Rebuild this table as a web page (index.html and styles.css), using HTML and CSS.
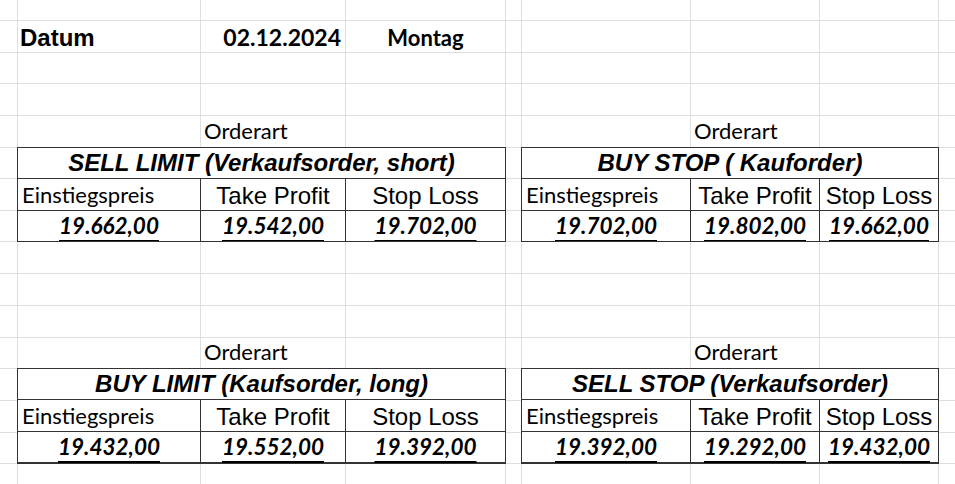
FILE: index.html
```html
<!DOCTYPE html>
<html lang="de">
<head>
<meta charset="utf-8">
<title>Orderarten</title>
<link rel="stylesheet" href="styles.css">
</head>
<body>
<div class="sheet">
  <!-- row 1 -->
  <div class="c"></div><div class="c"></div><div class="c"></div><div class="c"></div><div class="c"></div><div class="c"></div><div class="c"></div><div class="c"></div><div class="c"></div>
  <!-- row 2 -->
  <div class="c"></div>
  <div class="c left arial bold datum">Datum</div>
  <div class="c right cal bold date">02.12.2024</div>
  <div class="c center cal bold day">Montag</div>
  <div class="c"></div><div class="c"></div><div class="c"></div><div class="c"></div><div class="c"></div>
  <!-- row 3 -->
  <div class="c"></div><div class="c"></div><div class="c"></div><div class="c"></div><div class="c"></div><div class="c"></div><div class="c"></div><div class="c"></div><div class="c"></div>
  <!-- row 4 -->
  <div class="c"></div><div class="c"></div><div class="c"></div><div class="c"></div><div class="c"></div><div class="c"></div><div class="c"></div><div class="c"></div><div class="c"></div>
  <!-- row 5 -->
  <div class="c"></div><div class="c"></div>
  <div class="c left cal label">Orderart</div>
  <div class="c"></div><div class="c"></div><div class="c"></div>
  <div class="c left cal label">Orderart</div>
  <div class="c"></div><div class="c"></div>

  <!-- order tables (placed explicitly) -->
  <div class="order order-l top">
    <div class="o-title arial">SELL LIMIT (Verkaufsorder, short)</div>
    <div class="o-head cal left">Einstiegspreis</div>
    <div class="o-head arial center">Take Profit</div>
    <div class="o-head arial center">Stop Loss</div>
    <div class="o-val cal center"><u>19.662,00</u></div>
    <div class="o-val cal center"><u>19.542,00</u></div>
    <div class="o-val cal center"><u>19.702,00</u></div>
  </div>
  <div class="order order-r top">
    <div class="o-title arial">BUY STOP ( Kauforder)</div>
    <div class="o-head cal left">Einstiegspreis</div>
    <div class="o-head arial center">Take Profit</div>
    <div class="o-head arial center">Stop Loss</div>
    <div class="o-val cal center"><u>19.702,00</u></div>
    <div class="o-val cal center"><u>19.802,00</u></div>
    <div class="o-val cal center"><u>19.662,00</u></div>
  </div>
  <div class="order order-l bottom">
    <div class="o-title arial">BUY LIMIT (Kaufsorder, long)</div>
    <div class="o-head cal left">Einstiegspreis</div>
    <div class="o-head arial center">Take Profit</div>
    <div class="o-head arial center">Stop Loss</div>
    <div class="o-val cal center"><u>19.432,00</u></div>
    <div class="o-val cal center"><u>19.552,00</u></div>
    <div class="o-val cal center"><u>19.392,00</u></div>
  </div>
  <div class="order order-r bottom">
    <div class="o-title arial">SELL STOP (Verkaufsorder)</div>
    <div class="o-head cal left">Einstiegspreis</div>
    <div class="o-head arial center">Take Profit</div>
    <div class="o-head arial center">Stop Loss</div>
    <div class="o-val cal center"><u>19.392,00</u></div>
    <div class="o-val cal center"><u>19.292,00</u></div>
    <div class="o-val cal center"><u>19.432,00</u></div>
  </div>

  <!-- rows 6-8: remaining cells A, E, I -->
  <div class="c"></div><div class="c"></div><div class="c"></div>
  <div class="c"></div><div class="c"></div><div class="c"></div>
  <div class="c"></div><div class="c"></div><div class="c"></div>
  <!-- row 9 -->
  <div class="c"></div><div class="c"></div><div class="c"></div><div class="c"></div><div class="c"></div><div class="c"></div><div class="c"></div><div class="c"></div><div class="c"></div>
  <!-- row 10 -->
  <div class="c"></div><div class="c"></div><div class="c"></div><div class="c"></div><div class="c"></div><div class="c"></div><div class="c"></div><div class="c"></div><div class="c"></div>
  <!-- row 11 -->
  <div class="c"></div><div class="c"></div><div class="c"></div><div class="c"></div><div class="c"></div><div class="c"></div><div class="c"></div><div class="c"></div><div class="c"></div>
  <!-- row 12 -->
  <div class="c"></div><div class="c"></div>
  <div class="c left cal label">Orderart</div>
  <div class="c"></div><div class="c"></div><div class="c"></div>
  <div class="c left cal label">Orderart</div>
  <div class="c"></div><div class="c"></div>
  <!-- rows 13-15: remaining cells A, E, I -->
  <div class="c"></div><div class="c"></div><div class="c"></div>
  <div class="c"></div><div class="c"></div><div class="c"></div>
  <div class="c"></div><div class="c"></div><div class="c"></div>
  <!-- row 16 -->
  <div class="c"></div><div class="c"></div><div class="c"></div><div class="c"></div><div class="c"></div><div class="c"></div><div class="c"></div><div class="c"></div><div class="c"></div>
</div>
</body>
</html>
```
FILE: styles.css
```css
* { box-sizing: border-box; }
html, body { margin: 0; padding: 0; background: #fff; }
body { width: 955px; height: 484px; overflow: hidden; color: #000; }

.sheet {
  width: 955px;
  height: 484px;
  overflow: hidden;
  display: grid;
  gap: 1px;
  background: #dedede;
  grid-template-columns: 17px 182px 144px 159px 15px 168px 128px 118px 1fr;
  grid-template-rows: 20px 31px 30px 31px 31px 30px 31px 30px 31px 31px 31px 30px 31px 31px 30px 1fr;
}

.c {
  background: #fff;
  display: flex;
  align-items: flex-end;
  white-space: nowrap;
  min-width: 0;
  line-height: 1;
}

.arial { font-family: "Liberation Sans", Arial, sans-serif; font-size: 24px; }
.cal { font-family: Lato, "Liberation Sans", sans-serif; font-size: 22px; }
.bold { font-weight: 700; }

.left { justify-content: flex-start; padding-left: 3px; }
.center { justify-content: center; }
.right { justify-content: flex-end; padding-right: 4px; }

.datum { padding-bottom: 2px; padding-left: 2px; }
.date { padding-bottom: 3px; font-size: 23px; }
.day { padding-bottom: 3px; font-size: 22px; }
.label { padding-bottom: 5px; }

.order {
  display: grid;
  gap: 1px;
  background: #333;
  outline: 1px solid #333;
  grid-template-rows: 30px 31px 30px;
}
.order-l { grid-column: 2 / span 3; grid-template-columns: 182px 144px 159px; }
.order-r { grid-column: 6 / span 3; grid-template-columns: 168px 128px 118px; }
.top { grid-row: 6 / span 3; }
.bottom { grid-row: 13 / span 3; }

.o-title, .o-head, .o-val {
  background: #fff;
  display: flex;
  align-items: flex-end;
  white-space: nowrap;
  line-height: 1;
}
.o-title {
  grid-column: 1 / -1;
  justify-content: center;
  font-weight: 700;
  font-style: italic;
  padding-bottom: 3px;
}
.o-head { padding-bottom: 4px; }
.o-head.arial { padding-bottom: 2px; }
.o-head.left { padding-left: 4px; }
.o-val {
  font-weight: 700;
  font-style: italic;
  font-size: 22.5px;
  padding-bottom: 4px;
}
.o-val u {
  text-decoration-thickness: 2px;
  text-underline-offset: 6px;
}
```
